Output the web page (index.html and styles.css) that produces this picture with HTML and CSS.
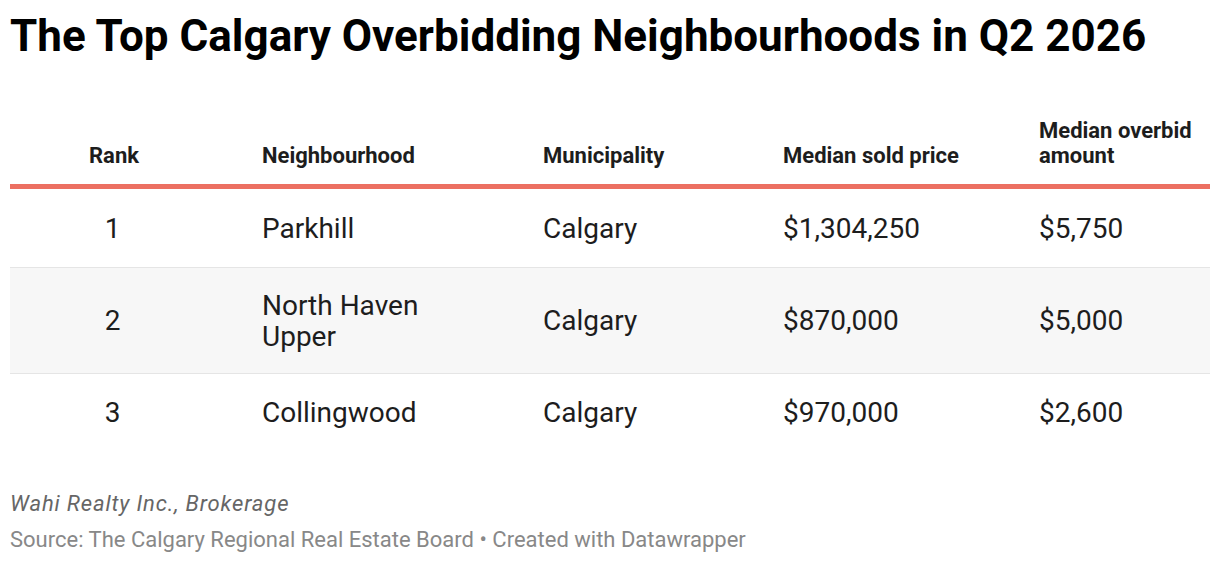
FILE: index.html
```html
<!DOCTYPE html>
<html lang="en">
<head>
<meta charset="utf-8">
<title>The Top Calgary Overbidding Neighbourhoods in Q2 2026</title>
<link rel="stylesheet" href="styles.css">
</head>
<body>
<div class="chart">
  <h1 class="title">The Top Calgary Overbidding Neighbourhoods in Q2 2026</h1>
  <div class="table">
    <div class="row head">
      <div class="cell rank">Rank</div>
      <div class="cell">Neighbourhood</div>
      <div class="cell">Municipality</div>
      <div class="cell">Median sold price</div>
      <div class="cell">Median overbid amount</div>
    </div>
    <div class="row first">
      <div class="cell rank">1</div>
      <div class="cell">Parkhill</div>
      <div class="cell">Calgary</div>
      <div class="cell">$1,304,250</div>
      <div class="cell">$5,750</div>
    </div>
    <div class="row alt">
      <div class="cell rank">2</div>
      <div class="cell">North Haven Upper</div>
      <div class="cell">Calgary</div>
      <div class="cell">$870,000</div>
      <div class="cell">$5,000</div>
    </div>
    <div class="row last">
      <div class="cell rank">3</div>
      <div class="cell">Collingwood</div>
      <div class="cell">Calgary</div>
      <div class="cell">$970,000</div>
      <div class="cell">$2,600</div>
    </div>
  </div>
  <div class="notes">
    <p class="byline">Wahi Realty Inc., Brokerage</p>
    <p class="source">Source: The Calgary Regional Real Estate Board • Created with Datawrapper</p>
  </div>
</div>
</body>
</html>
```

FILE: styles.css
```css
* { box-sizing: border-box; }
html, body { margin: 0; padding: 0; background: #fff; }
body {
  font-family: Roboto, "Liberation Sans", Arial, sans-serif;
  color: #1d1d1d;
}
.chart {
  padding: 11px 10px 0 10px;
}
.title {
  margin: 0;
  font-size: 44px;
  line-height: 50px;
  font-weight: 700;
  color: #000;
}
.table {
  margin-top: 57px;
}
.row {
  display: grid;
  grid-template-columns: 202px 281px 240px 256px 1fr;
  align-items: center;
  min-height: 78px;
  padding: 21px 0;
  border-bottom: 1px solid #e5e5e5;
  font-size: 28px;
  line-height: 31px;
}
.row.first { min-height: 79px; }
.row.alt { background: #f7f7f7; min-height: 106px; }
.row.last { border-bottom: none; min-height: 77px; }
.cell {
  padding: 0 10px 0 50px;
}
.cell.rank {
  padding: 0 0 0 3px;
  text-align: center;
}
.row.head {
  align-items: end;
  min-height: 0;
  padding: 0 0 16px 0;
  border-bottom: 5px solid #ec7062;
  font-size: 22px;
  line-height: 25px;
  font-weight: 700;
  color: #1d1d1d;
}
.row.head .cell { padding-right: 6px; }
.row.head .cell.rank { padding: 0 0 0 6px; }
.notes {
  margin-top: 35px;
}
.notes p { margin: 0; }
.byline {
  font-size: 22px;
  line-height: 36px;
  font-style: italic;
  letter-spacing: 0.85px;
  color: #666;
}
.source {
  font-size: 22px;
  line-height: 36px;
  color: #888;
}
```
